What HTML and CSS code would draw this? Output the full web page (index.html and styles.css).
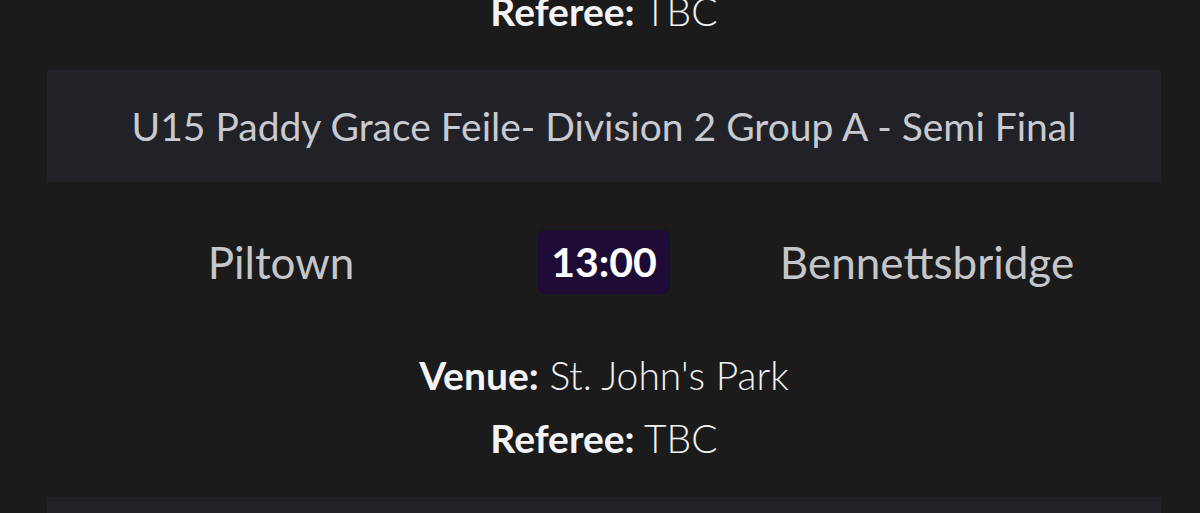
FILE: index.html
```html
<!DOCTYPE html>
<html lang="en">
<head>
  <meta charset="UTF-8">
  <title>Fixtures</title>
  <link rel="stylesheet" href="styles.css">
</head>
<body>

<div class="fixtures">

  <div class="fixture fixture-tail">
    <p class="meta"><strong>Referee:</strong> TBC</p>
  </div>

  <div class="fixture">
    <div class="comp-title">U15 Paddy Grace Feile- Division 2 Group A - Semi Final</div>
    <div class="teams">
      <div class="team">Piltown</div>
      <div class="time"><span>13:00</span></div>
      <div class="team">Bennettsbridge</div>
    </div>
    <p class="meta venue"><strong>Venue:</strong> St. John's Park</p>
    <p class="meta"><strong>Referee:</strong> TBC</p>
  </div>

  <div class="fixture">
    <div class="comp-title"></div>
  </div>

</div>

</body>
</html>
```

FILE: styles.css
```css
body {
  margin: 0;
  background-color: #1b1b1b;
  color: #f2f2f2;
  font-family: "Lato", "Noto Sans", sans-serif;
  overflow: hidden;
}
.fixtures {
  padding: 0 39px 0 47px;
}
.fixture-tail {
  margin-top: -9px;
}
.fixture-tail .meta {
  margin-top: 0;
}
.comp-title {
  height: 112px;
  background-color: #212228;
  color: #c9cacf;
  font-size: 39px;
  display: flex;
  align-items: center;
  justify-content: center;
}
.teams {
  display: grid;
  grid-template-columns: 323px 323px 323px;
  justify-content: center;
  align-items: center;
  margin-top: 48px;
}
.team {
  text-align: center;
  color: #c5c6c9;
  font-size: 44px;
}
.time {
  text-align: center;
}
.time span {
  display: inline-block;
  width: 132px;
  height: 64px;
  line-height: 64px;
  background-color: #1d0a35;
  border-radius: 8px;
  color: #fff;
  font-weight: bold;
  font-size: 41px;
}
.meta {
  margin: 23px 0 0;
  line-height: 40px;
  font-size: 39px;
  font-weight: 300;
  text-align: center;
}
.meta strong {
  color: #f4f4f6;
  font-weight: bold;
}
.venue {
  margin-top: 61px;
}
.fixture .meta:last-child {
  margin-bottom: 39px;
}
```
